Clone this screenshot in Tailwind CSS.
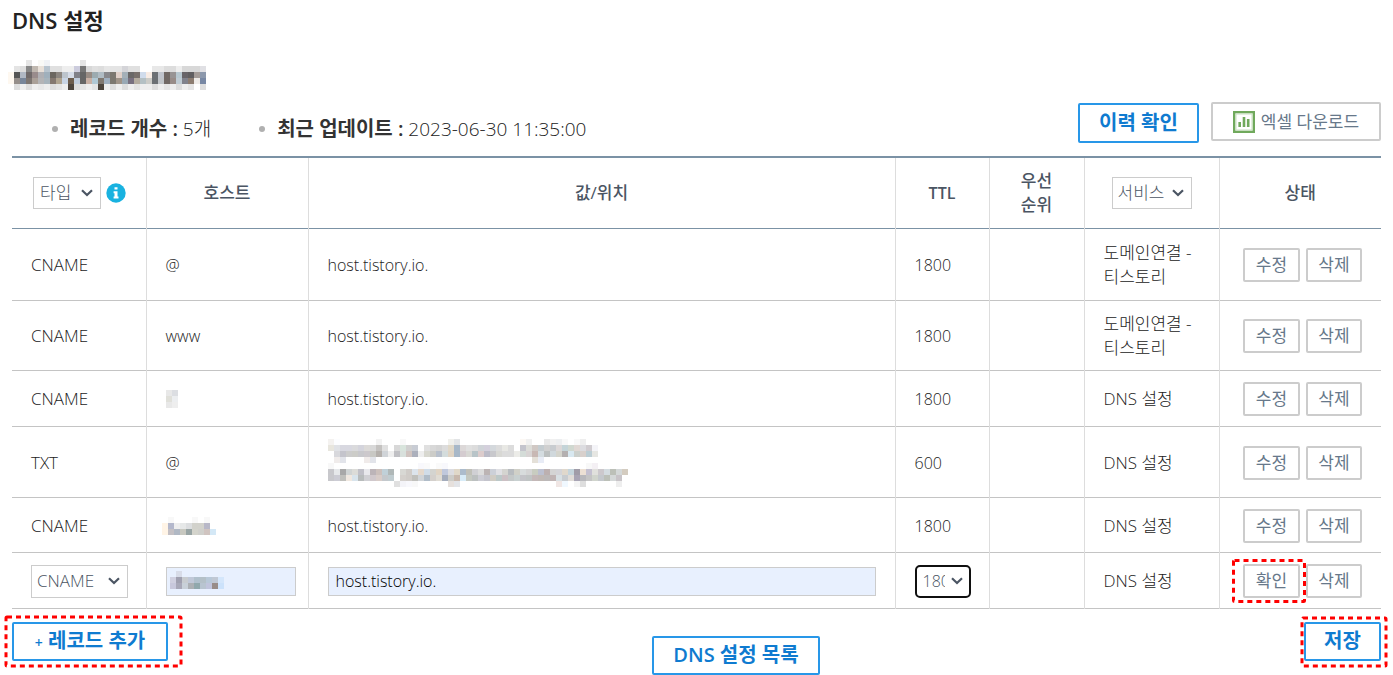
<!DOCTYPE html>
<html lang="ko">
<head>
  <meta charset="UTF-8">
  <meta name="viewport" content="width=device-width, initial-scale=1.0">
  <title>DNS 설정</title>
  <script src="https://cdn.jsdelivr.net/npm/@tailwindcss/browser@4"></script>
</head>
<body class="bg-white px-3 font-['Open_Sans','Noto_Sans_CJK_KR',sans-serif] text-base leading-6 font-light text-[#222]">
  <!-- Shared icons -->
  <svg class="hidden">
    <symbol id="chevron" viewBox="0 0 12 8"><path d="M1 1.2 L6 6 L11 1.2" fill="none" stroke="#4b5563" stroke-width="2.2"/></symbol>
  </svg>

  <header>
    <h1 class="pt-1 text-[22px] leading-8 font-semibold text-[#222]">DNS 설정</h1>
    <h2 class="-ml-1 pt-6 h-[66px]" aria-label="도메인"><svg data-mosaic="domain" class="block"></svg></h2>
    <div class="flex items-start justify-between h-[54px]">
      <ul class="flex gap-12 pl-10 pt-[13px] text-[19px] leading-7">
        <li class="flex items-center gap-3"><span class="size-1.5 rounded-full bg-[#b0b0b0]"></span><span><b class="text-xl leading-7 font-semibold text-[#333]">레코드 개수 :</b> 5개</span></li>
        <li class="flex items-center gap-3"><span class="size-1.5 rounded-full bg-[#b0b0b0]"></span><span><b class="text-xl leading-7 font-semibold text-[#333]">최근 업데이트 :</b> 2023-06-30 11:35:00</span></li>
      </ul>
      <div class="flex gap-3">
        <button class="mt-px h-10 w-[121px] rounded-xs border-2 border-[#2897e8] text-xl leading-7 font-semibold text-[#0f7bd0]">이력 확인</button>
        <button class="flex h-[39px] w-[170px] items-center justify-center gap-1.5 rounded-xs border-2 border-[#ccc] text-[17px] font-normal text-[#67788a]">
          <svg class="size-[22px]" viewBox="0 0 22 22">
            <rect x="1.2" y="1.2" width="19.6" height="19.6" fill="#fff" stroke="#70a95c" stroke-width="2.4"/>
            <rect x="3" y="3" width="16" height="16" fill="none" stroke="#c9dfc1"/>
            <path d="M6.7 16v-5M11 16V6M15.2 16V8" stroke="#70a95c" stroke-width="2.6"/>
          </svg>
          엑셀 다운로드
        </button>
      </div>
    </div>
  </header>

  <table class="w-full table-fixed border-collapse border-t-2 border-[#7b92a5] [&_th+th]:border-l [&_th+th]:border-l-[#ddd] [&_td+td]:border-l [&_td+td]:border-l-[#ddd] [&_td]:px-[19px] [&_td]:pt-0.5 [&_tbody_tr]:border-b [&_tbody_tr]:border-b-[#c4c4c4] [&_td:first-child]:text-[17px] [&_td:nth-child(n+6)]:text-[17px]">
    <colgroup>
      <col class="w-[134px]"><col class="w-[162px]"><col><col class="w-[94px]"><col class="w-[95px]"><col class="w-[135px]"><col class="w-[162px]">
    </colgroup>
    <thead>
      <tr class="h-[71px] border-b border-b-[#7b92a5] text-[17px] text-[#4b5563] [&_th]:font-medium">
        <th>
          <div class="flex items-center gap-[5px] pl-[21px]">
            <div class="relative">
              <select aria-label="타입" class="block h-8 w-[68px] appearance-none border border-[#ccc] pl-1.5 font-light"><option>타입</option></select>
              <svg class="pointer-events-none absolute top-3 right-2 h-2 w-3"><use href="#chevron"/></svg>
            </div>
            <svg class="size-5" viewBox="0 0 20 20"><circle cx="10" cy="10" r="9.7" fill="#19b2e0"/><path d="M8.5 4.2h3v2.4h-3zM7.6 8.2h3.9v5.4h1v2H7.6v-2h.9v-3.4h-.9z" fill="#fff"/></svg>
          </div>
        </th>
        <th>호스트</th>
        <th>값/위치</th>
        <th><span class="text-base font-semibold">TTL</span></th>
        <th>우선<br>순위</th>
        <th>
          <div class="relative mx-auto w-20">
            <select aria-label="서비스" class="block h-8 w-full appearance-none border border-[#ccc] pl-[5px] font-light"><option>서비스</option></select>
            <svg class="pointer-events-none absolute top-3 right-2 h-2 w-3"><use href="#chevron"/></svg>
          </div>
        </th>
        <th>상태</th>
      </tr>
    </thead>
    <tbody id="records">
      <tr class="h-[72px]"><td>CNAME</td><td>@</td><td>host.tistory.io.</td><td>1800</td><td></td><td>도메인연결 - 티스토리</td><td data-actions></td></tr>
      <tr class="h-[70px]"><td>CNAME</td><td>www</td><td>host.tistory.io.</td><td>1800</td><td></td><td>도메인연결 - 티스토리</td><td data-actions></td></tr>
      <tr class="h-14"><td>CNAME</td><td><svg data-mosaic="hostA"></svg></td><td>host.tistory.io.</td><td>1800</td><td></td><td>DNS 설정</td><td data-actions></td></tr>
      <tr class="h-[71px]"><td>TXT</td><td>@</td><td><svg data-mosaic="txt" class="block"></svg></td><td>600</td><td></td><td>DNS 설정</td><td data-actions></td></tr>
      <tr class="h-[55px]"><td>CNAME</td><td><svg data-mosaic="hostB" class="-ml-1 block"></svg></td><td>host.tistory.io.</td><td>1800</td><td></td><td>DNS 설정</td><td data-actions></td></tr>
      <tr class="h-14">
        <td>
          <div class="relative w-[97px]">
            <select aria-label="레코드 타입" class="block h-[33px] w-full appearance-none border border-[#ccc] pl-[5px] text-[#4b5563]"><option>CNAME</option></select>
            <svg class="pointer-events-none absolute top-3 right-2 h-2 w-3"><use href="#chevron"/></svg>
          </div>
        </td>
        <td>
          <div class="relative w-[130px]">
            <input aria-label="호스트" class="block h-[29px] w-full border border-[#ccc] bg-[#e8f0fe] px-2">
            <svg data-mosaic="input" class="pointer-events-none absolute top-1 left-1"></svg>
          </div>
        </td>
        <td><input aria-label="값/위치" value="host.tistory.io." class="block h-[29px] w-full border border-[#ccc] bg-[#e8f0fe] px-[7px] text-black"></td>
        <td>
          <div class="relative w-14">
            <select aria-label="TTL" class="block h-[33px] w-full appearance-none rounded-[5px] border-2 border-[#101010] pr-6 pl-1.5 text-[#4b5563]"><option>1800</option></select>
            <svg class="pointer-events-none absolute top-3 right-2 h-2 w-3"><use href="#chevron"/></svg>
          </div>
        </td>
        <td></td>
        <td>DNS 설정</td>
        <td>
          <div class="flex justify-end gap-1.5">
            <div class="relative">
              <button class="block h-[34px] w-[57px] rounded-xs border-2 border-[#ccc] font-normal text-[#67788a]">확인</button>
              <svg class="pointer-events-none absolute -top-[5px] -left-[11px] h-[44px] w-[74px] overflow-visible"><rect x="1.5" y="1.5" width="71" height="41" rx="1" fill="none" stroke="#f00" stroke-width="3" stroke-dasharray="5 4"/></svg>
            </div>
            <button class="h-[34px] w-14 rounded-xs border-2 border-[#ccc] font-normal text-[#67788a]">삭제</button>
          </div>
        </td>
      </tr>
    </tbody>
  </table>

  <footer class="flex items-start justify-between pt-[13px] text-xl leading-7 font-semibold text-[#0f7bd0]">
    <div class="relative">
      <button class="h-[39px] w-[156px] rounded-xs border-2 border-[#2897e8]"><span class="text-sm">+</span> 레코드 추가</button>
      <svg class="pointer-events-none absolute -top-[7px] -left-2 h-[53px] w-[179px]"><rect x="2" y="2" width="175" height="49" rx="1" fill="none" stroke="#f00" stroke-width="3" stroke-dasharray="5 4"/></svg>
    </div>
    <button class="mt-3.5 h-[39px] w-[168px] rounded-xs border-2 border-[#2897e8]">DNS 설정 목록</button>
    <div class="relative">
      <button class="h-[39px] w-[77px] rounded-xs border-2 border-[#2897e8]">저장</button>
      <svg class="pointer-events-none absolute -top-1.5 -left-1 h-[52px] w-[88px]"><rect x="2" y="2" width="84" height="48" rx="1" fill="none" stroke="#f00" stroke-width="3" stroke-dasharray="5 4"/></svg>
    </div>
  </footer>

  <script>
    // Masked values: one colour per 6px block, "-" is an empty block
    const mosaics = {
      domain: [
        '- - - e5e5e5 - f9f9f6 f0f2f5 - - - - - e5e5e5',
        '- e4e4e4 dddddd 878787 c0b8b0 e8e0d8 b8c4ce e0e0e0 e0e0e0 eeeeee eeeeee ccccdd 777777 d8d8d8 e0e0e0 dddddd e6e6e6 e4e4e4 e4e4e4 d4d4d8 e0e0e0 e0e0e0 - - e8e8e8 e8e8e8 dddddd dddddd eeeeee d8d8d8 d8d8d8 d8d8d8 e0e0e4',
        'fef8f0 555555 b0b8c4 706a6a 998c8c b0b0b4 a0b0bc 6c6760 8c8680 bcc4cc d6dce8 808088 666666 988c84 9cabb0 b0bcc4 88888c 7c7870 e0d0c8 a4b0b8 6a6868 78706c d0dcec f8ece4 6c7074 c0c4cc 706864 989494 b8c8d0 686468 605e60 a49c98 8c98ac',
        'fef8f0 958e8a 78869a 7d7672 aaa098 b4b4b6 a8b4bc 847870 b0a490 c8d4e4 6c5c4c c0ccdc 666666 c8b0a4 b0c8d4 807870 a0b0c0 7c7870 a09488 98a8b4 787080 b4aca0 b4c0c4 ccccc8 6c7074 c0c4c8 706864 988c88 c0ccd4 80828c 8c7c70 eeebe8 7888a4',
        '- dddddd eeeeee dddddd eeeeee e8e8e8 eeeeee dddddd e4e4e4 eeeeee 4c443c dddddd e4e4e4 eeeeee e4e4e4 4c443c eeeeee dddddd eeeeee dddddd eeeeee e4e4e4 eeeeee eeeeee dddddd eeeeee e4e4e4 eeeeee dddddd eeeeee e4e4e4 - dddddd'
      ],
      hostA: ['e8e8e8 dcdee2', 'e0e0da eceef0', 'e8e8e8 eeeeee'],
      hostB: [
        '- f8f8f8 - - - f8f8f8 - f8f8f8',
        'fff4e6 b4b8cc eeeeee e6e8e8 dcdee0 d2d2cc d2d2cc b8b8c8 -',
        'fff4e6 c4c0c4 b0b8c4 c8c8c0 98a4a4 d4d4cc d0d0cc d0c4c0 d4e8f6'
      ],
      input: [
        '- d8dce8',
        'd0d0e0 a0a0b0 c8ccd0 c0c8d8 b0c0cc b4c0c8 b8c8d8 c0c8d4 d4e6fb',
        'c8c8dc a8a8b8 c8d0d8 acb0b4 90a8ac b8c4d0 c0c4dc 988c88 cce2fb'
      ],
      txt: [
        'f4f2f0 fcfdff - - - - - - f2f2f2 - - - f8f8f8 - - - - - - - f0f0ec e2e4e6 - - - - - - - - - - fcf8f4 f0f0f0 - - e8e8e8 f0f0f0 eceef0 f8f8f8 - f8f8f8 eeeeee',
        'e8e6de e0e2e6 d8d8e0 d8d8e0 dadadc d4d4dc dcdad8 d8d8d8 c4c2c0 e0e0e0 - d8d8d8 d8e4dc d0d0d0 c8ccd4 - e0e0e0 d8d8d8 d4d4d4 dcdcdc e0d8c8 a8b8c8 dcd8d8 e0e0e0 dcdcdc d0d4d8 d4d0dc d4d8dc dcdcdc e8e8e4 dcdcdc - c4c4cc dcdcd8 d0c8c4 c4ccd0 d0d0d0 c8ccd0 dcd8d8 c4d4d8 d0d8d0 e0d8d4 dcdce0 d0ccd0 f4f4f8',
        '- d8d8dc c4c4cc cccccc ccccc8 c8c8cc ccc8cc c8c8c4 b4b0ac d0d4d8 eeeeee c0c0c4 d8e0dc d0c4c0 acb0bc eeeeee d8d8d0 ccccc8 b8c0cc d4dcdc e0d4c4 a8b8c8 d4ccd0 d8d8d4 b8c4c8 dccccc bcbcc8 c8c8cc d8d8d4 dcdcdc dcdcdc ecece8 d4dcd8 d8d4d4 c8b8b4 d4dce0 bcc0c0 d0d8dc d4d4cc b4b0b0 d8e8f0 ccd0cc d8d0cc bccdd4 e6e6e2',
        '- f0eceb e2e4ea - - - f0ebea e2e4ea - - - - - - - - - - - - - - - - - - - - - - - - - - e4e0d8 e8ecf6',
        'f8f8f8 - - - - - - - - - - - - - - f8f8fc fafafa - fafafa f8f8fc - - - - - - - - - - - - - - - - - - - - - - - f8f8f8 f4f0f4',
        'c8c8cc e6e8ea a8a8a8 d0d4d4 dcdcd8 c0c0c8 e8e8ec bcb4b8 ccc0bc c0d0d8 b0b8b8 - d8d8d4 d0ccc8 dce4ec e4d8cc d0dce8 d4d4d0 e0d4c4 c0c8dc dcdce0 e0d8c8 acbccc c0c0b8 d0d0d4 dcdcdc bcb4b4 ccd0d8 e0e0e4 d4d4d0 b8bcc0 d0d0c8 d8dcdc d4d4d4 c8ccc0 bcc0d0 bcb0b0 d4d4d4 d4d4d8 e0d8cc c4d4dc a09ca8 ece0d4 c4c0d0 e0e0dc ccc8cc d4dce0 bcc0b8 d4d8d8 d4ccc0',
        'c8c8cc ccccd4 c0c0bc f0e8e0 d8e4ec b8bcbc d0d0d4 d0c8cc d8ccc8 c4c8cc c0ccd0 - d4d0cc d0ccc8 c0c0bc d0d4d8 b0bcc8 d4d0cc e0dcd4 a4acbc ccccc8 c8b8ac d8ecf8 c4c8c0 bcc0c0 ccccd4 c4c4cc d0ccc4 bcc8c8 ccc0c4 c4c8c8 c8d0d0 c4c4c8 c0c4c4 c4b8b8 c0b8b4 bcb8b8 c0b4b4 d8e0e4 c8ccd0 e0dcd8 a8a4b4 b8b8bc c4c4c4 d0d4cc c4c8cc bcc0b8 d4d8d8 c8c4c8',
        '- - - - - - - - - - - e0e0e0 f4f4f8 f8f8fc f8f8f8 - - - - - e6e0dc e2e4e8 - - - - - - - - - - - - - - - - f0e6e4 f0f8ff - f4f4f4 dedede - - - - - eeeeee'
      ]
    };

    document.querySelectorAll('[data-mosaic]').forEach(svg => {
      const rows = mosaics[svg.dataset.mosaic].map(row => row.split(' '));
      svg.setAttribute('width', Math.max(...rows.map(row => row.length)) * 6);
      svg.setAttribute('height', rows.length * 6);
      svg.setAttribute('shape-rendering', 'crispEdges');
      svg.innerHTML = rows.map((row, y) => row.map((color, x) =>
        color === '-' ? '' : `<rect x="${x * 6}" y="${y * 6}" width="6" height="6" fill="#${color}"/>`
      ).join('')).join('');
    });

    document.querySelectorAll('[data-actions]').forEach(cell => {
      cell.innerHTML = `
        <div class="flex justify-end gap-1.5">
          <button class="h-[34px] w-[57px] rounded-xs border-2 border-[#ccc] font-normal text-[#67788a]">수정</button>
          <button class="h-[34px] w-14 rounded-xs border-2 border-[#ccc] font-normal text-[#67788a]">삭제</button>
        </div>`;
    });
  </script>
</body>
</html>
